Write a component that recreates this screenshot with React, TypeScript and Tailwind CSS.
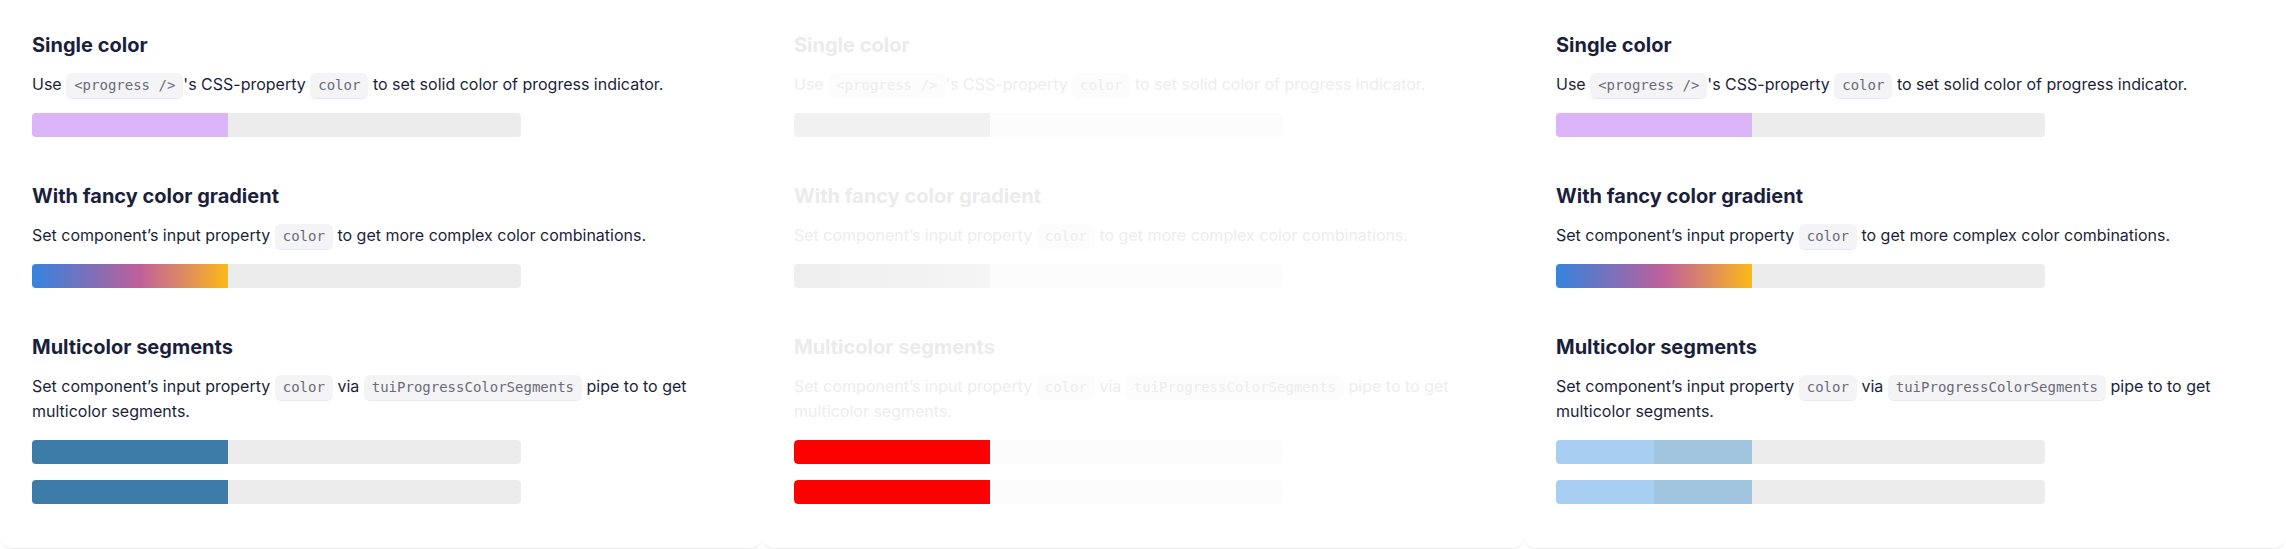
import React from 'react';

type Tone = 'normal' | 'faded';

const Code: React.FC<{ children: React.ReactNode; tone: Tone }> = ({ children, tone }) => (
    <code
        className={
            tone === 'normal'
                ? "rounded-md bg-[#f4f4f6] px-2 pt-[4px] pb-[5px] font-['DejaVu_Sans_Mono',monospace] text-[14px] text-[#6b6b78] shadow-[0_1px_0_#e4e8fb]"
                : "rounded-md bg-[#fcfcfc] px-2 pt-[4px] pb-[5px] font-['DejaVu_Sans_Mono',monospace] text-[14px] text-[#ededed]"
        }
    >
        {children}
    </code>
);

const Track: React.FC<{ tone: Tone; children: React.ReactNode }> = ({ tone, children }) => (
    <div className={`flex h-6 w-[489px] overflow-hidden rounded ${tone === 'normal' ? 'bg-[#ececec]' : 'bg-[#fcfcfc]'}`}>
        {children}
    </div>
);

type Variant = 'first' | 'middle' | 'last';

const Card: React.FC<{ variant: Variant }> = ({ variant }) => {
    const tone: Tone = variant === 'middle' ? 'faded' : 'normal';
    const heading = tone === 'normal' ? 'text-[#1b1f3b]' : 'text-[#ebebeb]';
    const text = tone === 'normal' ? 'text-[#1b1f3b]' : 'text-[#ededed]';

    return (
        <div className="h-[548px] rounded-b-xl bg-white pl-8 pt-[31px] shadow-[0_2px_2px_-1px_rgba(0,0,0,0.1)]">
            {/* single color */}
            <h3 className={`text-[20px] leading-7 font-bold ${heading}`}>Single color</h3>
            <p className={`mt-[13px] text-[16px] leading-6 ${text}`}>
                Use <Code tone={tone}>&lt;progress /&gt;</Code>'s CSS-property <Code tone={tone}>color</Code> to set solid color of progress indicator.
            </p>
            <div className="mt-4">
                <Track tone={tone}>
                    <div className={`h-full w-[40%] ${tone === 'normal' ? 'bg-[#dbb5f7]' : 'bg-[#f1f1f1]'}`} />
                </Track>
            </div>

            {/* gradient */}
            <h3 className={`mt-[45px] text-[20px] leading-7 font-bold ${heading}`}>With fancy color gradient</h3>
            <p className={`mt-[13px] text-[16px] leading-6 ${text}`}>
                Set component’s input property <Code tone={tone}>color</Code> to get more complex color combinations.
            </p>
            <div className="mt-4">
                <Track tone={tone}>
                    <div
                        className={`h-full w-[40%] ${
                            tone === 'normal'
                                ? 'bg-[linear-gradient(to_right,#3584de,#8a6cb3_35%,#c0609b_55%,#e0905a_80%,#fbba16)]'
                                : 'bg-[linear-gradient(to_right,#eeeeee,#f5f5f5)]'
                        }`}
                    />
                </Track>
            </div>

            {/* segments */}
            <h3 className={`mt-[45px] text-[20px] leading-7 font-bold ${heading}`}>Multicolor segments</h3>
            <p className={`mt-[13px] w-[700px] text-[16px] leading-6 ${text}`}>
                Set component’s input property <Code tone={tone}>color</Code> via <Code tone={tone}>tuiProgressColorSegments</Code> pipe to to get multicolor segments.
            </p>
            <div className="mt-[17px] flex flex-col gap-4">
                {[0, 1].map((i) => (
                    <Track key={i} tone={tone}>
                        {variant === 'first' && <div className="h-full w-[40%] bg-[#3d7ba8]" />}
                        {variant === 'middle' && <div className="h-full w-[40%] rounded-l bg-[#ff0000]" />}
                        {variant === 'last' && (
                            <>
                                <div className="h-full w-[20%] bg-[#a8cff2]" />
                                <div className="h-full w-[20%] bg-[#a2c5df]" />
                            </>
                        )}
                    </Track>
                ))}
            </div>
        </div>
    );
};

const App: React.FC = () => {
    return (
        <div className="grid h-[549px] w-[2286px] grid-cols-3 bg-white font-['Inter',sans-serif]">
            <Card variant="first" />
            <Card variant="middle" />
            <Card variant="last" />
        </div>
    );
};

export default App;
